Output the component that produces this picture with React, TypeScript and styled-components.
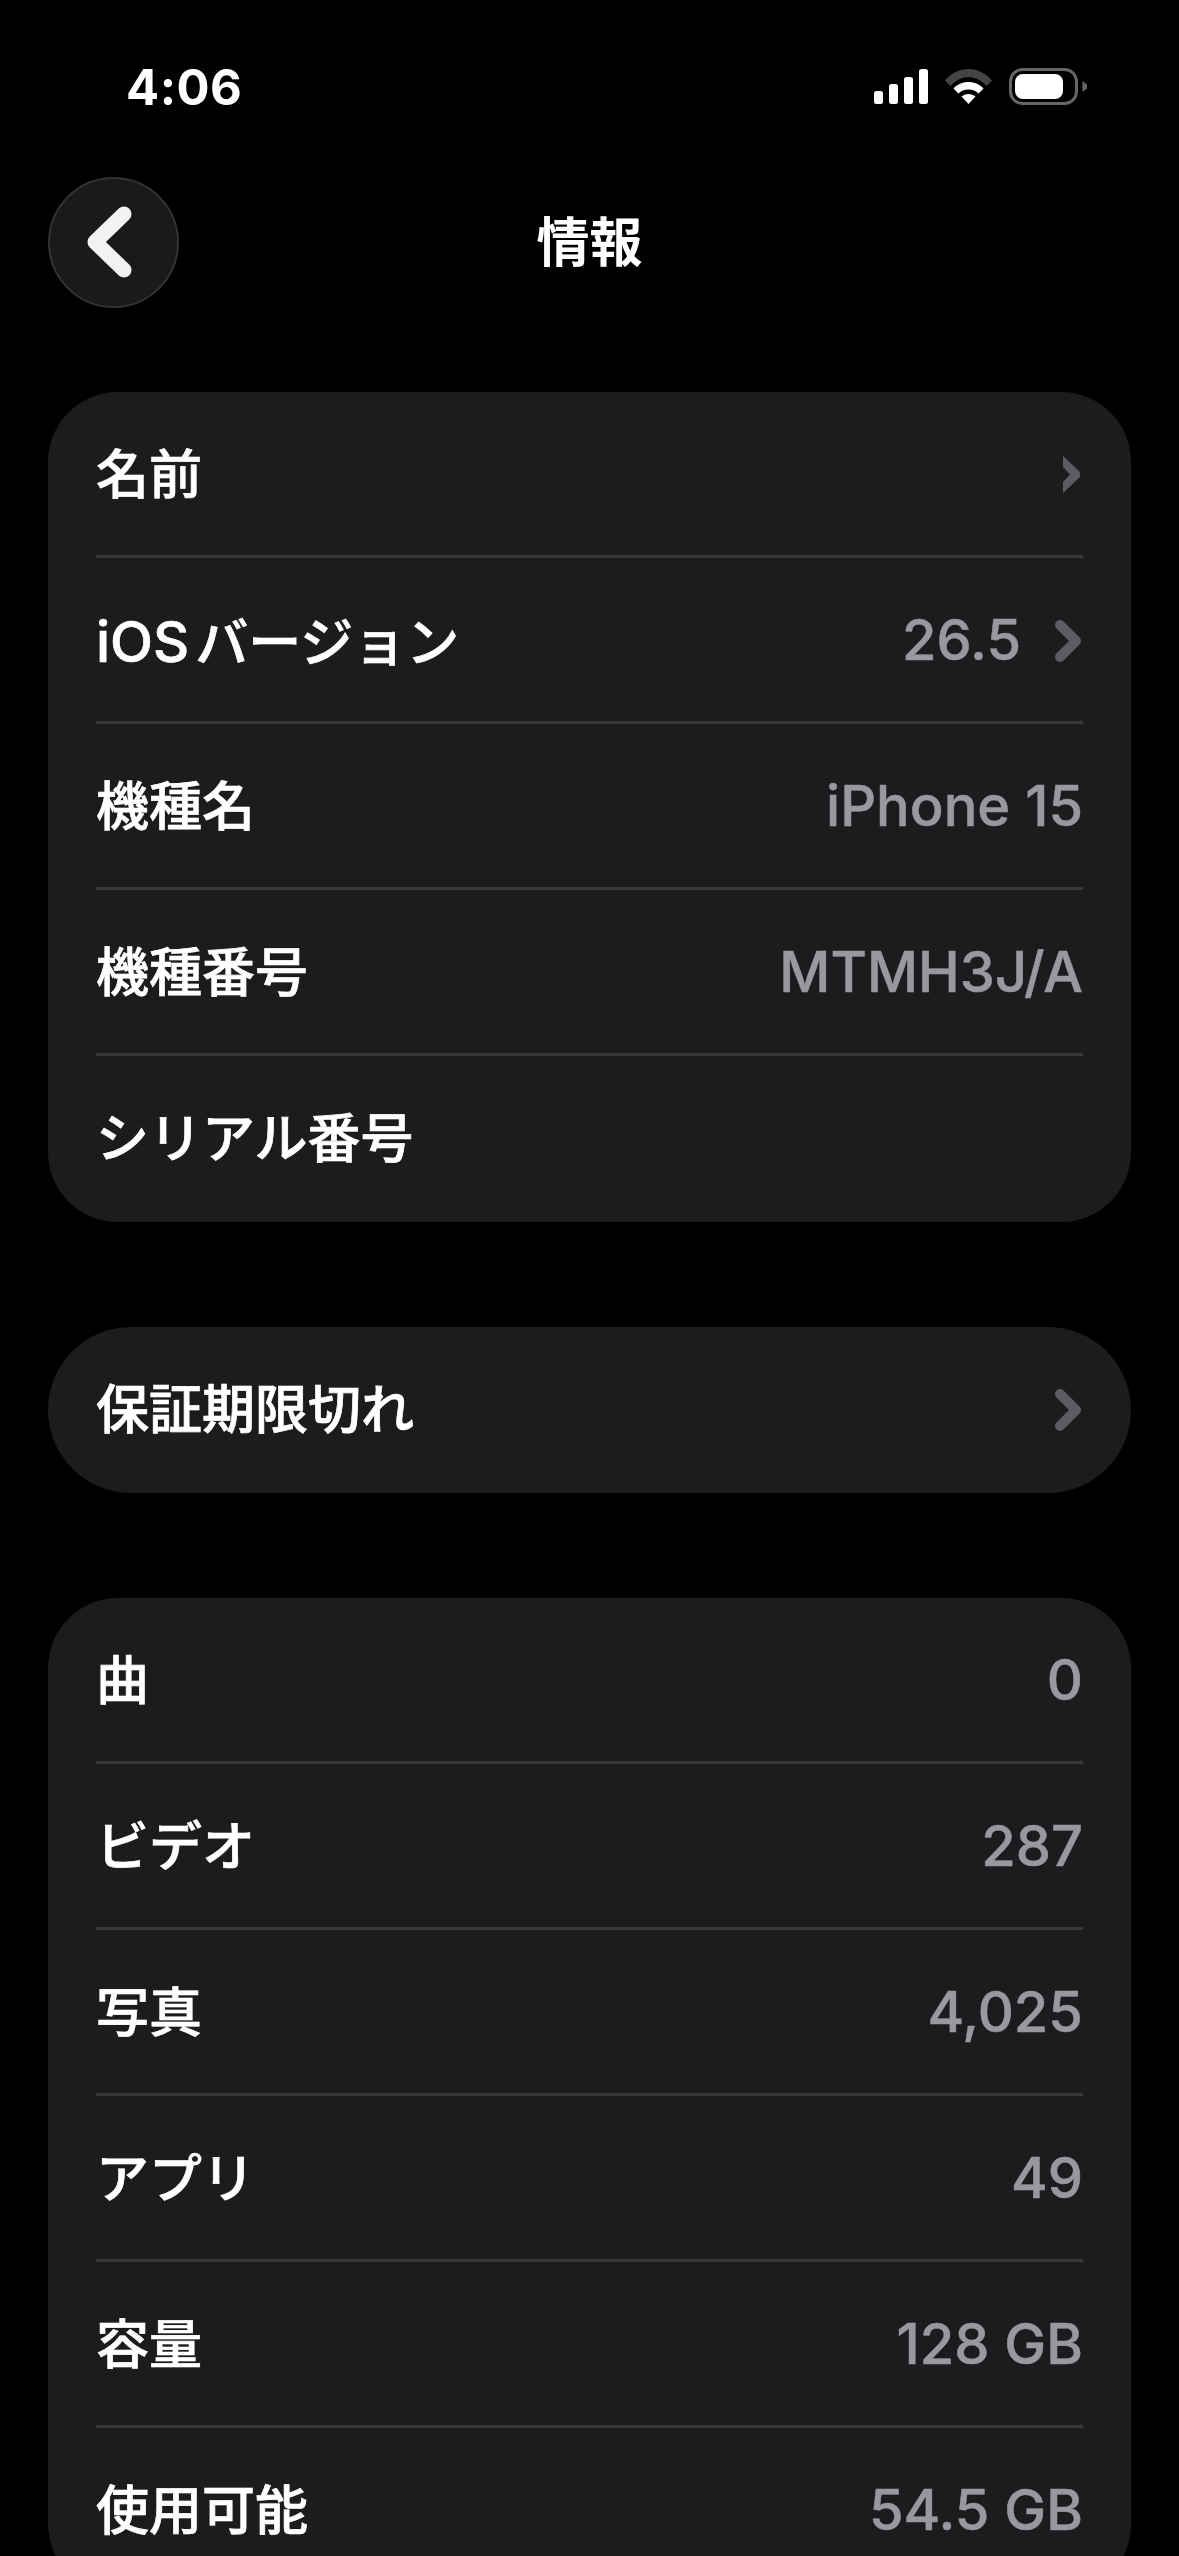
import React from "react";
import styled, { createGlobalStyle } from "styled-components";

const GlobalStyle = createGlobalStyle`
  html, body {
    margin: 0;
    padding: 0;
    background: #000;
  }
  body {
    font-family: "Inter", "Noto Sans CJK JP", sans-serif;
  }
`;

const Screen = styled.div`
  width: 1179px;
  height: 2556px;
  overflow: hidden;
  background: #000;
  color: #fff;
`;

const StatusBar = styled.div`
  height: 177px;
  box-sizing: border-box;
  padding: 64px 91px 0 126px;
  display: flex;
  justify-content: space-between;
  align-items: flex-start;
`;

const Time = styled.div`
  font-size: 49px;
  line-height: 48px;
  font-weight: 700;
  letter-spacing: 0.5px;
`;

const StatusIcons = styled.div`
  display: flex;
  align-items: center;
  gap: 17px;
  margin-top: 4px;
`;

const NavBar = styled.div`
  height: 215px;
  padding: 0 48px;
  display: flex;
  align-items: flex-start;
`;

const BackButton = styled.button`
  width: 131px;
  height: 131px;
  padding: 0 10px 2px 0;
  flex: none;
  border-radius: 50%;
  background: #1a1a1a;
  border: 2px solid #333;
  display: flex;
  align-items: center;
  justify-content: center;
`;

const Title = styled.h1`
  flex: 1;
  margin: 0 131px 0 0;
  height: 131px;
  line-height: 133px;
  text-align: center;
  font-size: 53px;
  font-weight: 700;
`;

const Content = styled.div`
  display: flex;
  flex-direction: column;
  gap: 105px;
  padding: 0 48px;
`;

const Card = styled.div<{ $radius: number }>`
  background: #1c1c1e;
  border-radius: ${(p) => p.$radius}px;
`;

const Row = styled.div`
  position: relative;
  height: 166px;
  box-sizing: border-box;
  padding: 0 48px 3px;
  display: flex;
  align-items: center;
  justify-content: space-between;

  & + &::before {
    content: "";
    position: absolute;
    top: -3px;
    left: 48px;
    right: 48px;
    height: 3px;
    background: #38383a;
  }
`;

const Label = styled.span<{ $latin?: boolean }>`
  font-size: 53px;
  font-weight: 500;
  -webkit-text-stroke: 0.7px #fff;
  margin-bottom: ${(p) => (p.$latin ? 2 : 6)}px;
`;

const Latin = styled.span`
  font-size: 56px;
  margin-right: -8px;
`;

const Trailing = styled.div`
  display: flex;
  align-items: center;
  gap: 34px;
`;

const Value = styled.span`
  font-size: 56px;
  font-weight: 500;
  -webkit-text-stroke: 0.5px #98989f;
  color: #98989f;
`;

const ChevronIcon = styled.svg`
  display: block;
  margin: 2px 2px 0 0;
`;

const Signal = () => (
  <svg width="54" height="35" viewBox="0 0 54 35" fill="#fff">
    <rect x="0" y="22" width="9" height="13" rx="2.5" />
    <rect x="15" y="15" width="9" height="20" rx="2.5" />
    <rect x="30" y="8" width="9" height="27" rx="2.5" />
    <rect x="45" y="0" width="9" height="35" rx="2.5" />
  </svg>
);

const Wifi = () => (
  <svg width="47" height="35" viewBox="0 0 47 35">
    <path d="M0 11.5C6 4.5 14 0 23.5 0S41 4.5 47 11.5L41.5 17C36.5 11.5 30.5 8 23.5 8S10.5 11.5 5.5 17Z" fill="#444" />
    <path d="M8.5 19.5C12 15.5 17.5 13 23.5 13S35 15.5 38.5 19.5L33.5 24.5C31 22 27.5 20.5 23.5 20.5S16 22 13.5 24.5Z" fill="#fff" />
    <path d="M16.5 27.5C18.5 26 21 25 23.5 25S28.5 26 30.5 27.5L23.5 35Z" fill="#fff" />
  </svg>
);

const Battery = () => (
  <svg width="79" height="37" viewBox="0 0 79 37">
    <rect x="1.5" y="1.5" width="66" height="34" rx="12" fill="none" stroke="#666" strokeWidth="3" />
    <rect x="6" y="6" width="48" height="25" rx="8" fill="#fff" />
    <path d="M73.5 13L78 16.5V20.5L73.5 24Z" fill="#666" />
  </svg>
);

const BackChevron = () => (
  <svg width="46" height="72" viewBox="0 0 46 72">
    <path d="M38 8L9 36L38 64" fill="none" stroke="#f2f2f2" strokeWidth="15" strokeLinecap="round" strokeLinejoin="round" />
  </svg>
);

const Chevron = () => (
  <ChevronIcon width="26" height="42" viewBox="0 0 26 42">
    <path d="M5 5L21 21L5 37" fill="none" stroke="#5c5c61" strokeWidth="10" strokeLinecap="round" strokeLinejoin="round" />
  </ChevronIcon>
);

// the first row's chevron is cut off on its left side in the screenshot
const ClippedChevron = () => (
  <ChevronIcon width="18" height="37" viewBox="0 0 18 37">
    <path d="M0 0L16.5 15.5Q18 18.5 16.5 21.5L0 37V26L7 18.5L0 11Z" fill="#5c5c61" />
  </ChevronIcon>
);

type RowData = {
  label: React.ReactNode;
  latin?: boolean;
  value?: string;
  chevron?: "full" | "clipped";
};

const aboutRows: RowData[] = [
  { label: "名前", chevron: "clipped" },
  { label: <><Latin>iOS</Latin> バージョン</>, latin: true, value: "26.5", chevron: "full" },
  { label: "機種名", value: "iPhone 15" },
  { label: "機種番号", value: "MTMH3J/A" },
  { label: "シリアル番号" },
];

const warrantyRows: RowData[] = [{ label: "保証期限切れ", chevron: "full" }];

const mediaRows: RowData[] = [
  { label: "曲", value: "0" },
  { label: "ビデオ", value: "287" },
  { label: "写真", value: "4,025" },
  { label: "アプリ", value: "49" },
  { label: "容量", value: "128 GB" },
  { label: "使用可能", value: "54.5 GB" },
];

const InfoCard = ({ rows, radius }: { rows: RowData[]; radius: number }) => (
  <Card $radius={radius}>
    {rows.map((row, index) => (
      <Row key={index}>
        <Label $latin={row.latin}>{row.label}</Label>
        <Trailing>
          {row.value && <Value>{row.value}</Value>}
          {row.chevron === "full" && <Chevron />}
          {row.chevron === "clipped" && <ClippedChevron />}
        </Trailing>
      </Row>
    ))}
  </Card>
);

export default function App() {
  return (
    <>
      <GlobalStyle />
      <Screen>
        <StatusBar>
          <Time>4:06</Time>
          <StatusIcons>
            <Signal />
            <Wifi />
            <Battery />
          </StatusIcons>
        </StatusBar>
        <NavBar>
          <BackButton>
            <BackChevron />
          </BackButton>
          <Title>情報</Title>
        </NavBar>
        <Content>
          <InfoCard rows={aboutRows} radius={70} />
          <InfoCard rows={warrantyRows} radius={83} />
          <InfoCard rows={mediaRows} radius={70} />
        </Content>
      </Screen>
    </>
  );
}
